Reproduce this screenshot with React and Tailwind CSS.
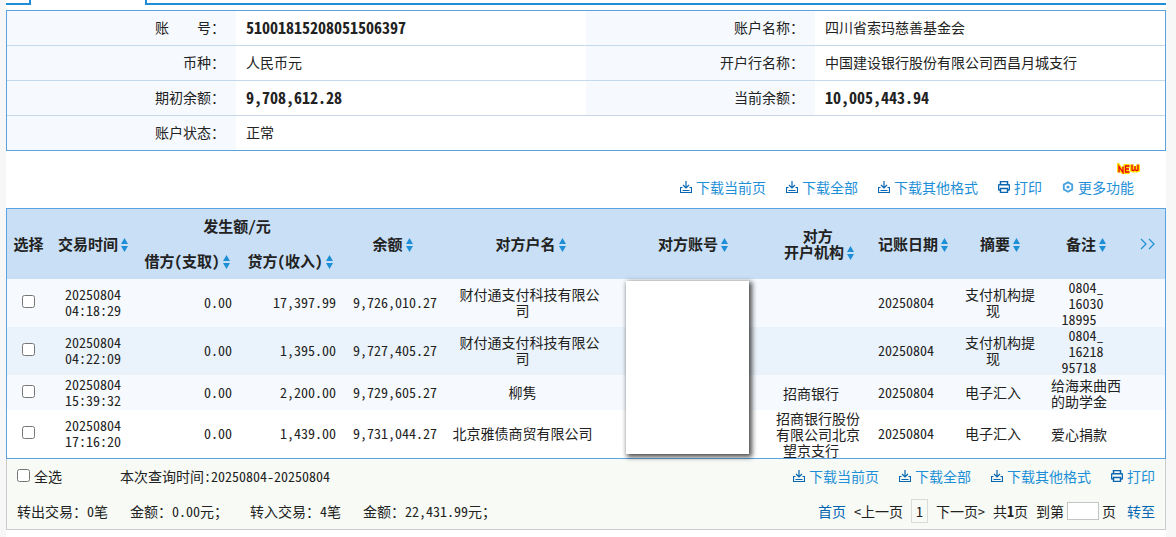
const sans = "font-['Noto_Sans_Mono_CJK_SC','Noto_Sans_CJK_SC',sans-serif]"

const accountRows = [
  [
    { label: '账\u3000\u3000号：', value: '51001815208051506397', bold: true },
    { label: '账户名称：', value: '四川省索玛慈善基金会' },
  ],
  [
    { label: '币种：', value: '人民币元' },
    { label: '开户行名称：', value: '中国建设银行股份有限公司西昌月城支行' },
  ],
  [
    { label: '期初余额：', value: '9,708,612.28', bold: true },
    { label: '当前余额：', value: '10,005,443.94', bold: true },
  ],
  [{ label: '账户状态：', value: '正常' }],
]

// a leading full-width space is part of the bank's own text
const records = [
  {
    time: '20250804\n04:18:29',
    debit: '0.00',
    credit: '17,397.99',
    balance: '9,726,010.27',
    name: '\u3000财付通支付科技有限公\n司',
    bank: '',
    date: '20250804',
    summary: '\u3000支付机构提\n现',
    remark: '\u30000804_\n\u300016030\n18995',
    bg: 'bg-[#f6fafe]',
  },
  {
    time: '20250804\n04:22:09',
    debit: '0.00',
    credit: '1,395.00',
    balance: '9,727,405.27',
    name: '\u3000财付通支付科技有限公\n司',
    bank: '',
    date: '20250804',
    summary: '\u3000支付机构提\n现',
    remark: '\u30000804_\n\u300016218\n95718',
    bg: 'bg-[#eaf3fb]',
  },
  {
    time: '20250804\n15:39:32',
    debit: '0.00',
    credit: '2,200.00',
    balance: '9,729,605.27',
    name: '柳隽',
    bank: '招商银行',
    date: '20250804',
    summary: '电子汇入',
    remark: '\u3000给海来曲西\n的助学金',
    bg: 'bg-[#f6fafe]',
  },
  {
    time: '20250804\n17:16:20',
    debit: '0.00',
    credit: '1,439.00',
    balance: '9,731,044.27',
    name: '北京雅债商贸有限公司',
    bank: '\u3000招商银行股份\n\u3000有限公司北京\n望京支行',
    date: '20250804',
    summary: '电子汇入',
    remark: '爱心捐款',
    bg: 'bg-white',
  },
]

function DownloadIcon() {
  return (
    <svg width="12" height="12" viewBox="0 0 12 12" fill="none" stroke="#0a66b0" aria-hidden="true">
      <path d="M6 0v7M3 4l3 3l3 -3" strokeWidth="1.2" />
      <path d="M2.5 6.5h-2v5h11v-5h-2M2.5 9.5h7" strokeWidth="1.2" />
    </svg>
  )
}

function PrintIcon() {
  return (
    <svg width="12" height="12" viewBox="0 0 12 12" fill="none" stroke="#0a66b0" aria-hidden="true">
      <path d="M2.5 3.5v-3h7v3M2.5 9h-1.5l-.5 -.5v-4l.5 -.8h10l.5 .8v4l-.5 .5h-1.5" strokeWidth="1.5" />
      <path d="M2.5 7.5h7v4h-7z" strokeWidth="1.4" />
    </svg>
  )
}

function GearIcon() {
  return (
    <svg width="12" height="12" viewBox="0 0 12 12" fill="none" stroke="#4aa3dc" aria-hidden="true">
      <path d="M6 1.2l4.2 2.4v4.8l-4.2 2.4l-4.2 -2.4v-4.8z" strokeWidth="1.9" strokeLinejoin="round" />
      <circle cx="6" cy="6" r="1.6" fill="#4aa3dc" stroke="none" />
    </svg>
  )
}

function NewBadge() {
  const letters = 'M2 9.5v-6l4 6v-6M12.5 3h-4v6h4M8.5 6h3.5M15 1.5v5.5l1.5 .5l1.5 -1l1.5 1l1.5 -.5v-5.5M18 3v3.5'
  return (
    <svg className="absolute -top-4 -right-1.5" width="23" height="11" viewBox="0 0 23 11" fill="none" role="img" aria-label="NEW">
      <path d={letters} stroke="#ffe100" strokeWidth="4" />
      <path d={letters} stroke="#e60012" strokeWidth="1.3" />
    </svg>
  )
}

function ToolButton({ icon, children }) {
  return (
    <button type="button" className="flex items-center gap-1 whitespace-nowrap text-[#1e8fd6]">
      {icon}
      <span>{children}</span>
    </button>
  )
}

function ExportButtons() {
  return (
    <>
      <ToolButton icon={<DownloadIcon />}>下载当前页</ToolButton>
      <ToolButton icon={<DownloadIcon />}>下载全部</ToolButton>
      <ToolButton icon={<DownloadIcon />}>下载其他格式</ToolButton>
      <ToolButton icon={<PrintIcon />}>打印</ToolButton>
    </>
  )
}

function SortIcon() {
  return (
    <svg width="7" height="14" viewBox="0 0 7 14" fill="#1e8fd6" aria-hidden="true">
      <path d="M3.5 0L7 6H0zM0 8h7L3.5 14z" />
    </svg>
  )
}

function Sort({ children }) {
  return (
    <button type="button" className="inline-flex items-end gap-[3px] whitespace-pre font-bold">
      <span>{children}</span>
      <SortIcon />
    </button>
  )
}

function AccountInfo() {
  return (
    <table className="w-full table-fixed border-separate border-spacing-0 border border-[#5ba3e0]">
      <colgroup>
        <col className="w-[229px]" />
        <col className="w-[350px]" />
        <col className="w-[229px]" />
        <col className="w-[350px]" />
      </colgroup>
      <tbody className="[&>tr:not(:last-child)>*]:border-b [&>tr>*]:border-[#c5d8ec] [&>tr>*]:pb-0.5">
        {accountRows.map((row, i) => (
          <tr key={i} className={i === accountRows.length - 1 ? 'h-[34px]' : 'h-[35px]'}>
            {row.map((item) => [
              <th key="l" scope="row" className="bg-[#f6fafe] pr-[11px] text-right font-normal">
                {item.label}
              </th>,
              <td key="v" colSpan={row.length === 1 ? 3 : 1} className="pl-2.5">
                {item.bold ? <b className="text-base/4">{item.value}</b> : item.value}
              </td>,
            ])}
          </tr>
        ))}
      </tbody>
    </table>
  )
}

function RecordTable() {
  return (
    <div className="relative">
      <table className="w-full table-fixed border-separate border-spacing-0 border border-[#5ba3e0] text-center">
        <colgroup>
          <col className="w-[43px]" />
          <col className="w-[86px]" />
          <col className="w-[102px]" />
          <col className="w-[104px]" />
          <col className="w-[101px]" />
          <col className="w-[159px]" />
          <col className="w-[158px]" />
          <col className="w-[102px]" />
          <col className="w-[88px]" />
          <col className="w-[86px]" />
          <col className="w-[86px]" />
          <col className="w-[43px]" />
        </colgroup>
        <thead className="bg-[#c8dff5] text-[15px]/4">
          <tr className="h-[35px]">
            <th rowSpan={2}>选择</th>
            <th rowSpan={2}><Sort>交易时间</Sort></th>
            <th colSpan={2} className="pr-1 pb-0.5">发生额/元</th>
            <th rowSpan={2}><Sort>余额</Sort></th>
            <th rowSpan={2} className="pl-4"><Sort>对方户名</Sort></th>
            <th rowSpan={2} className="pl-6"><Sort>对方账号</Sort></th>
            <th rowSpan={2} className="pl-4"><Sort>{' 对方\n开户机构'}</Sort></th>
            <th rowSpan={2} className="pl-3.5"><Sort>记账日期</Sort></th>
            <th rowSpan={2} className="pl-3.5"><Sort>摘要</Sort></th>
            <th rowSpan={2} className="pl-3.5"><Sort>备注</Sort></th>
            <th rowSpan={2} className="pl-[18px]">
              <button type="button" aria-label="更多列" className="block">
                <svg width="16" height="12" viewBox="0 0 16 12" fill="none" stroke="#1e8fd6" aria-hidden="true">
                  <path d="M1 1l5 5l-5 5M9 1l5 5l-5 5" strokeWidth="1.2" />
                </svg>
              </button>
            </th>
          </tr>
          <tr className="h-[35px]">
            <th className="pb-0.5"><Sort>借方(支取)</Sort></th>
            <th className="pb-0.5"><Sort>贷方(收入)</Sort></th>
          </tr>
        </thead>
        <tbody>
          {records.map((r, i) => (
            <tr key={i} className={`h-[35px] whitespace-pre ${r.bg}`}>
              <td className="pb-[3px]">
                <input
                  type="checkbox"
                  aria-label={`选择 ${r.time.replace('\n', ' ')}`}
                  className="mx-auto block size-[13px]"
                />
              </td>
              <td className="pb-0.5">{r.time}</td>
              <td className="pr-1.5 pb-0.5 text-right">{r.debit}</td>
              <td className="pr-1.5 pb-0.5 text-right">{r.credit}</td>
              <td className="pr-1.5 pb-0.5 text-right">{r.balance}</td>
              <td className="pb-0.5">{r.name}</td>
              <td />
              <td>{r.bank}</td>
              <td className="pb-0.5">{r.date}</td>
              <td className="pb-0.5">{r.summary}</td>
              <td>{r.remark}</td>
              <td />
            </tr>
          ))}
        </tbody>
      </table>
      {/* cover over the counterparty account numbers */}
      <div className="absolute top-[73px] bottom-[5px] left-[53.45%] w-[123px] bg-white shadow-[2px_2px_5px_1px_rgba(0,0,0,0.7)]" />
    </div>
  )
}

function Footer() {
  return (
    <div className="border-x border-b border-[#c9cccb] bg-[#f7faf5] px-2.5">
      <div className="flex h-[35px] items-center justify-between pb-0.5">
        <div className="flex items-center gap-[58px]">
          <label className="flex items-center gap-1">
            <input type="checkbox" className="size-[13px]" />
            全选
          </label>
          <span>本次查询时间:20250804-20250804</span>
        </div>
        <div className="flex gap-5">
          <ExportButtons />
        </div>
      </div>
      <div className="flex h-[35px] items-center justify-between pb-0.5">
        <div className="flex gap-[22px]">
          <span>转出交易：0笔</span>
          <span>金额：0.00元；</span>
          <span>转入交易：4笔</span>
          <span>金额：22,431.99元；</span>
        </div>
        <div className="flex items-center gap-2">
          <a href="#first" className="text-[#0066b3]">首页</a>
          <span>&lt;上一页</span>
          <span className="border border-[#d9dcd8] px-1 py-[3px]">1</span>
          <span>下一页&gt;</span>
          <span>共<b>1</b>页</span>
          <label className="mr-[3px] flex items-center gap-[3px]">
            到第
            <input type="text" className="h-[18px] w-8 border border-[#c4c4c4] bg-white" />
            页
          </label>
          <a href="#go" className="text-[#0066b3]">转至</a>
        </div>
      </div>
    </div>
  )
}

export default function App() {
  return (
    <div className={`min-h-screen bg-[#f7f7f7] pr-2.5 pl-1.5 text-sm/4 text-[#222] ${sans}`}>
      <div className="min-h-screen bg-white">
        <div className="flex h-[5px] justify-between">
          <div className="w-[25px] border-r-2 border-b-2 border-[#1e8fd6]" />
          <div className="ml-[114px] flex-1 border-b-2 border-l-2 border-[#1e8fd6]" />
        </div>
        <div className="pt-[5px]">
          <AccountInfo />
        </div>
        <div className="flex h-[57px] items-center justify-end gap-5 pt-3.5 pr-8">
          <ExportButtons />
          <div className="relative">
            <ToolButton icon={<GearIcon />}>更多功能</ToolButton>
            <NewBadge />
          </div>
        </div>
        <RecordTable />
        <Footer />
      </div>
    </div>
  )
}
